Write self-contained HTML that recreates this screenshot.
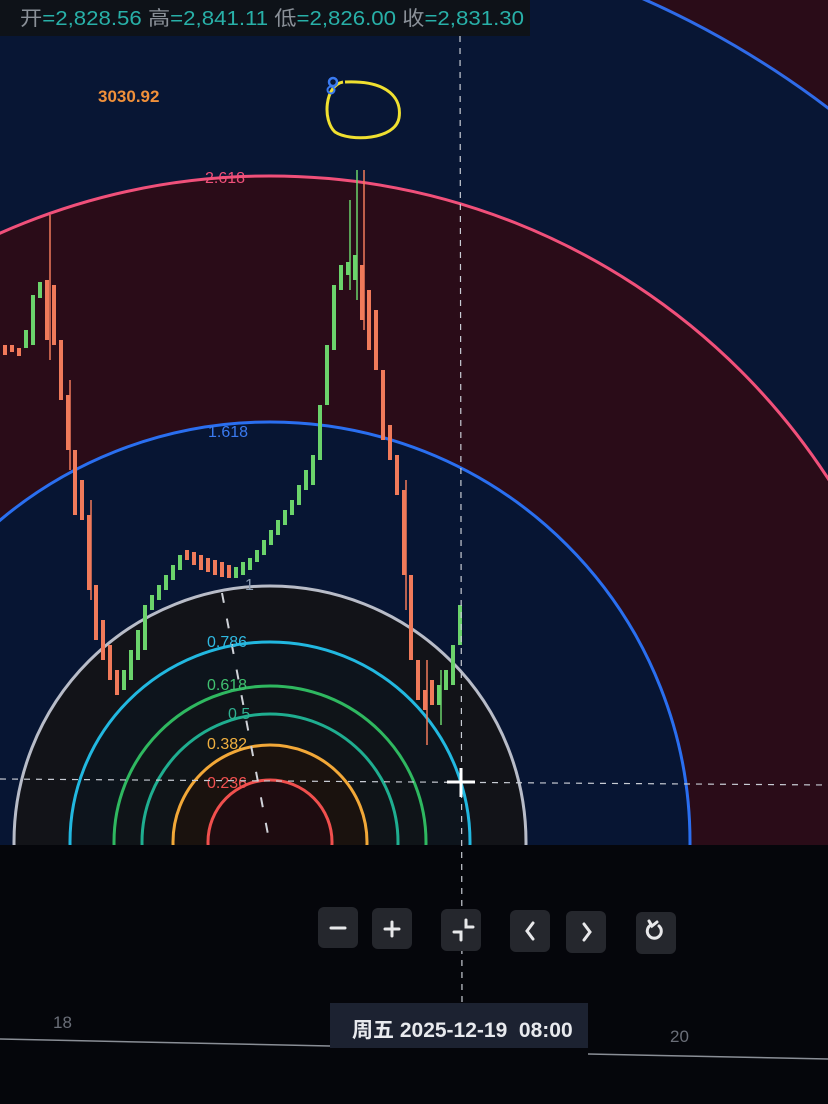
<!DOCTYPE html>
<html><head><meta charset="utf-8"><style>
html,body{margin:0;padding:0;background:#05060b;width:828px;height:1104px;overflow:hidden}
svg{display:block}
text{font-family:"Liberation Sans","Noto Sans CJK SC",sans-serif}
</style></head><body>
<svg width="828" height="1104" viewBox="0 0 828 1104" xmlns="http://www.w3.org/2000/svg">
<defs><clipPath id="c"><rect x="0" y="0" width="828" height="845"/></clipPath></defs>
<rect width="828" height="1104" fill="#05060b"/>
<g clip-path="url(#c)">
<rect width="828" height="845" fill="#2a0c18"/>
<circle cx="270" cy="842" r="922" fill="#081634" stroke="#2f6be8" stroke-width="3"/>
<circle cx="270" cy="842" r="666" fill="#2a0c18" stroke="#f0507a" stroke-width="3"/>
<circle cx="270" cy="842" r="420" fill="#071533" stroke="#2a6ff0" stroke-width="3"/>
<circle cx="270" cy="842" r="256" fill="#121318" stroke="#b8bcc8" stroke-width="3"/>
<circle cx="270" cy="842" r="200" fill="#0d141c" stroke="#22b8e0" stroke-width="3"/>
<circle cx="270" cy="842" r="156" fill="#0f1418" stroke="#2fb860" stroke-width="3"/>
<circle cx="270" cy="842" r="128" fill="#0f1418" stroke="#1fae90" stroke-width="3"/>
<circle cx="270" cy="842" r="97" fill="#1a120e" stroke="#f2a838" stroke-width="3"/>
<circle cx="270" cy="842" r="62" fill="#1e0c10" stroke="#f0504e" stroke-width="3"/>
<line x1="222" y1="593" x2="270" y2="845" stroke="#cfd2d8" stroke-width="2" stroke-dasharray="10 16"/>
<g fill="#f07a5a" stroke="none">
<g stroke="#f07a5a" stroke-width="1.5">
<line x1="50" y1="215" x2="50" y2="360"/><line x1="364" y1="170" x2="364" y2="330"/>
<line x1="406" y1="480" x2="406" y2="610"/><line x1="427" y1="660" x2="427" y2="745"/>
<line x1="70" y1="380" x2="70" y2="470"/><line x1="91" y1="500" x2="91" y2="600"/>
</g>
<rect x="3" y="345" width="4" height="10"/><rect x="10" y="345" width="4" height="7"/><rect x="17" y="348" width="4" height="8"/>
<rect x="45" y="280" width="4" height="60"/><rect x="52" y="285" width="4" height="60"/><rect x="59" y="340" width="4" height="60"/>
<rect x="66" y="395" width="4" height="55"/><rect x="73" y="450" width="4" height="65"/><rect x="80" y="480" width="4" height="40"/>
<rect x="87" y="515" width="4" height="75"/><rect x="94" y="585" width="4" height="55"/><rect x="101" y="620" width="4" height="40"/>
<rect x="108" y="645" width="4" height="35"/><rect x="115" y="670" width="4" height="25"/>
<rect x="185" y="550" width="4" height="10"/><rect x="192" y="552" width="4" height="13"/><rect x="199" y="555" width="4" height="15"/>
<rect x="206" y="558" width="4" height="14"/><rect x="213" y="560" width="4" height="15"/><rect x="220" y="562" width="4" height="15"/><rect x="227" y="565" width="4" height="13"/>
<rect x="360" y="265" width="4" height="55"/><rect x="367" y="290" width="4" height="60"/><rect x="374" y="310" width="4" height="60"/>
<rect x="381" y="370" width="4" height="70"/><rect x="388" y="425" width="4" height="35"/><rect x="395" y="455" width="4" height="40"/>
<rect x="402" y="490" width="4" height="85"/><rect x="409" y="575" width="4" height="85"/><rect x="416" y="660" width="4" height="40"/>
<rect x="423" y="690" width="4" height="20"/><rect x="430" y="680" width="4" height="25"/>
</g>
<g fill="#6bd36b">
<g stroke="#6bd36b" stroke-width="1.5">
<line x1="357" y1="170" x2="357" y2="300"/><line x1="350" y1="200" x2="350" y2="290"/>
<line x1="441" y1="670" x2="441" y2="725"/>
</g>
<rect x="24" y="330" width="4" height="18"/><rect x="31" y="295" width="4" height="50"/><rect x="38" y="282" width="4" height="16"/>
<rect x="122" y="670" width="4" height="20"/><rect x="129" y="650" width="4" height="30"/><rect x="136" y="630" width="4" height="30"/>
<rect x="143" y="605" width="4" height="45"/><rect x="150" y="595" width="4" height="15"/><rect x="157" y="585" width="4" height="15"/>
<rect x="164" y="575" width="4" height="15"/><rect x="171" y="565" width="4" height="15"/><rect x="178" y="555" width="4" height="15"/>
<rect x="234" y="567" width="4" height="11"/><rect x="241" y="562" width="4" height="13"/><rect x="248" y="558" width="4" height="12"/>
<rect x="255" y="550" width="4" height="12"/><rect x="262" y="540" width="4" height="15"/><rect x="269" y="530" width="4" height="15"/>
<rect x="276" y="520" width="4" height="15"/><rect x="283" y="510" width="4" height="15"/><rect x="290" y="500" width="4" height="15"/>
<rect x="297" y="485" width="4" height="20"/><rect x="304" y="470" width="4" height="20"/><rect x="311" y="455" width="4" height="30"/>
<rect x="318" y="405" width="4" height="55"/><rect x="325" y="345" width="4" height="60"/><rect x="332" y="285" width="4" height="65"/>
<rect x="339" y="265" width="4" height="25"/><rect x="346" y="262" width="4" height="13"/><rect x="353" y="255" width="4" height="25"/>
<rect x="437" y="685" width="4" height="20"/><rect x="444" y="670" width="4" height="20"/><rect x="451" y="645" width="4" height="40"/><rect x="458" y="605" width="4" height="40"/>
</g>
<g font-size="16">
<text x="205" y="183" fill="#f0507a">2.618</text>
<text x="208" y="437" fill="#3a7af0">1.618</text>
<text x="245" y="590" fill="#8a9ab0">1</text>
<text x="207" y="647" fill="#30b8e0">0.786</text>
<text x="207" y="690" fill="#40c070">0.618</text>
<text x="228" y="719" fill="#30b090">0.5</text>
<text x="207" y="749" fill="#f0b040">0.382</text>
<text x="207" y="788" fill="#f05050">0.236</text>
</g>
<text x="98" y="102" font-size="17" font-weight="bold" fill="#f0903a">3030.92</text>
<path d="M343 82 C325 85 322 120 335 132 C350 142 395 140 399 118 C402 100 390 80 345 82" fill="none" stroke="#f0e030" stroke-width="3"/>
<circle cx="333" cy="82" r="4" fill="none" stroke="#3a7af0" stroke-width="2.5"/><circle cx="331" cy="90" r="3.5" fill="none" stroke="#3a7af0" stroke-width="2"/>
</g>
<rect x="0" y="0" width="530" height="36" fill="#0e1218"/>
<text x="20" y="25" font-size="20" fill="#8a9098" textLength="504" lengthAdjust="spacingAndGlyphs">开<tspan fill="#28b0a8">=2,828.56</tspan> 高<tspan fill="#28b0a8">=2,841.11</tspan> 低<tspan fill="#28b0a8">=2,826.00</tspan> 收<tspan fill="#28b0a8">=2,831.30</tspan></text>
<line x1="460" y1="36" x2="462" y2="1005" stroke="#c8ccd4" stroke-width="1.2" stroke-dasharray="6 6"/>
<line x1="0" y1="779" x2="828" y2="785" stroke="#c8ccd4" stroke-width="1.2" stroke-dasharray="6 6"/>
<line x1="447" y1="782" x2="475" y2="782" stroke="#fff" stroke-width="3"/><line x1="461" y1="768" x2="461" y2="797" stroke="#fff" stroke-width="3"/>
<g fill="#25272d">
<rect x="318" y="907" width="40" height="41" rx="6"/><rect x="372" y="908" width="40" height="41" rx="6"/>
<rect x="441" y="909" width="40" height="42" rx="6"/><rect x="510" y="910" width="40" height="42" rx="6"/>
<rect x="566" y="911" width="40" height="42" rx="6"/><rect x="636" y="912" width="40" height="42" rx="6"/>
</g>
<g stroke="#e8e8ea" stroke-width="3" fill="none" stroke-linecap="round">
<path d="M331 928 H345"/><path d="M385 929 H399 M392 922 V936"/>
<path d="M454 932 H461 V940 M466 920 V927 H473"/>
<path d="M533 923 L527 931 L533 939"/><path d="M584 924 L590 932 L584 940"/>
<path d="M651 925 A7 7 0 1 0 659 926" /><path d="M649 921 L652 926 L657 922"/>
</g>
<rect x="330" y="1003" width="258" height="45" fill="#1c2231"/>
<text x="352" y="1037" font-size="21" fill="#e8eaee" font-weight="bold">周五 2025-12-19 &#160;08:00</text>
<text x="53" y="1028" font-size="17" fill="#6a6e78">18</text>
<text x="670" y="1042" font-size="17" fill="#6a6e78">20</text>
<path d="M0 1039 L330 1046 M588 1054 L828 1059" stroke="#8a8e96" stroke-width="1.5"/>
</svg>
</body></html>
